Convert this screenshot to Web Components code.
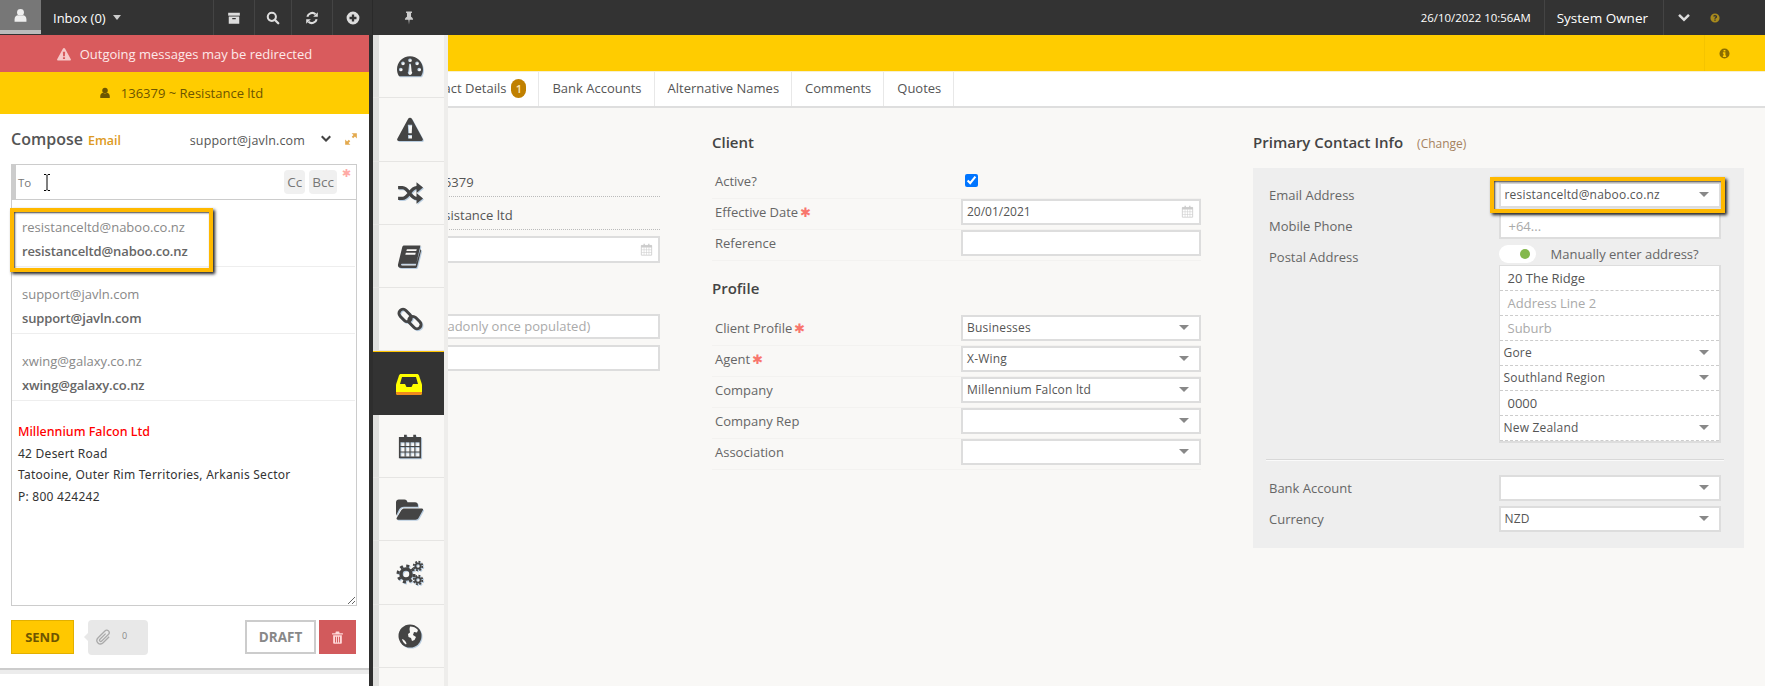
<!DOCTYPE html>
<html>
<head>
<meta charset="utf-8">
<title>Client</title>
<style>
  html, body { margin: 0; height: 686px; overflow: hidden; background: #f9f8f6; font-family: "Open Sans", "Noto Sans", sans-serif; }
</style>
</head>
<body>
<app-shell>
  <top-bar></top-bar>
  <client-page></client-page>
  <compose-drawer></compose-drawer>
</app-shell>

<script>
// icon shapes, all on a 24x24 box. var(--hole) is the colour behind the icon
const ICONS = {
  user: '<circle cx="12" cy="7" r="5.5"/><path d="M2.5 22v-4c0-4 3-6.500 5.500-6.500 2.500 1.800 5.500 1.800 8 0 2.500 0 5.500 2.500 5.500 6.500v4z"/>',
  archive: '<path d="M2 3h20v5H2z"/><path fill-rule="evenodd" d="M3 9.500h18V22H3zM9 12v2h6v-2z"/>',
  search: '<circle cx="10" cy="10" r="7" fill="none" stroke="currentColor" stroke-width="3.500"/><path d="M15 15l6 6" stroke="currentColor" stroke-width="4" stroke-linecap="round"/>',
  refresh: '<path d="M4 10a8.500 8.500 0 0 1 14-4.500" fill="none" stroke="currentColor" stroke-width="3.500"/><path d="M22 2v8h-8z"/><path d="M20 14a8.500 8.500 0 0 1-14 4.500" fill="none" stroke="currentColor" stroke-width="3.500"/><path d="M2 22v-8h8z"/>',
  plus: '<path fill-rule="evenodd" d="M12 1a11 11 0 1 0 0 22 11 11 0 0 0 0-22zM10 6h4v4h4v4h-4v4h-4v-4H6v-4h4z"/>',
  pin: '<path d="M7 1h10v2.500h-1.500V10c2 1 3.500 3 3.500 5H13l-1 8-1-8H5c0-2 1.500-4 3.500-5V3.500H7z"/>',
  warning: '<path fill-rule="evenodd" d="M12 1.500c.8 0 1.300.4 1.700 1l10 18.500c.5 1 0 2-1.200 2H1.500C.3 23-.2 22 .3 21l10-18.500c.4-.6.9-1 1.700-1zM10 8l.4 8h3.200l.4-8zM10.200 17.500v3.200h3.600v-3.200z"/>',
  dashboard: '<path fill-rule="evenodd" d="M12 3C5.400 3 0 8.400 0 15c0 2.200.6 4.200 1.600 6 .2.300.5.500.9.500h19c.4 0 .7-.2.900-.5 1-1.800 1.600-3.800 1.600-6 0-6.600-5.400-12-12-12zM12 5a1.700 1.700 0 1 1 0 3.400A1.700 1.700 0 0 1 12 5zM5.500 7.800a1.700 1.700 0 1 1 0 3.400 1.700 1.700 0 0 1 0-3.400zM3.500 13.500a1.700 1.700 0 1 1 0 3.400 1.700 1.700 0 0 1 0-3.400zM18.500 7.800a1.700 1.700 0 1 1 0 3.400 1.700 1.700 0 0 1 0-3.400zM20.500 13.500a1.700 1.700 0 1 1 0 3.400 1.700 1.700 0 0 1 0-3.400zM12.800 10l.7 6.800a2 2 0 1 1-3 0l.7-6.800z"/>',
  random: '<path d="M1 7h4c6 0 7 10 13 10h2M1 17h4c6 0 7-10 13-10h2" fill="none" stroke="currentColor" stroke-width="3"/><path d="M18 2l6 5-6 5zM18 12l6 5-6 5z"/>',
  book: '<path d="M7 1.500h15.500L18.500 19H5c-1.500 0-1.500 1.700 0 1.700h13l4.500-15.700.8 1-4 15.500c-.3 1-1 1.500-2 1.500H4c-2.200 0-3.500-1.500-3-3.500L5 3c.2-.9 1-1.500 2-1.500z"/><path fill="var(--hole)" d="M9.500 5h9.500l-.5 1.800H9zM8.500 8.500H18l-.5 1.800H8z"/>',
  link: '<g fill="none" stroke="currentColor" stroke-width="2.700"><rect x="1" y="5" width="13" height="7.500" rx="3.750" transform="rotate(45 7.500 8.750)"/><rect x="10" y="11.500" width="13" height="7.500" rx="3.750" transform="rotate(45 16.500 15.250)"/></g>',
  calendar: '<path d="M2.500 4.500h19v18h-19z" fill="none" stroke="currentColor" stroke-width="1.500"/><path d="M2 4h20v4.500H2zM6.500 1.500h2.500V6H6.500zM15 1.500h2.500V6H15z"/><path d="M2.500 12.500h19M2.500 17.500h19M7.500 8v14M12 8v14M16.500 8v14" fill="none" stroke="currentColor" stroke-width="1"/>',
  folder: '<path d="M0 5.500C0 4 1 3 2.500 3h5C9 3 10 4 10 5.500h7c1.500 0 2.500 1 2.500 2.500v1.500H7c-2 0-3.500 1-4.300 2.500L0 17.500z"/><path d="M7.500 11H23c1 0 1.300.8.800 1.700L20 19.500c-.6 1-1.500 1.500-2.700 1.500H1.500c-1 0-1.300-.8-.8-1.700L4.800 12.500c.6-1 1.500-1.500 2.700-1.500z"/>',
  globe: '<circle cx="12" cy="12" r="11.500"/><path fill="var(--hole)" d="M12 2.500c3 0 6 1 8 3.500l-1 2.500-3-.5-1 3 3 2-1.500 3-2.500 1-1-3-2.500-1-.5-3 2-1.500-.5-3.500zM4 15c2 .5 3.500 2 4.500 4.500l-.5 1C6 19.500 4.500 17.500 4 15z"/>',
  clip: '<path d="M20 11l-8.500 8.500c-2.200 2.200-5.300 2.200-7.300.2s-2-5.100.2-7.300L14 2.800c1.500-1.500 3.600-1.500 5-.1s1.400 3.500-.1 5L9.500 17c-.8.8-1.900.8-2.600.1s-.7-1.800.1-2.600L15 6.500" fill="none" stroke="currentColor" stroke-width="1.800"/>',
  trash: '<path fill-rule="evenodd" d="M9 1h6l1 3h6v2.500H2V4h6zM4 8h16v14c0 .8-.7 1.500-1.500 1.500h-13C4.700 23.500 4 22.800 4 22zM7.500 10.500v10.500h1.800V10.500zM11.100 10.500v10.500h1.800V10.500zM14.700 10.500v10.500h1.800V10.500z"/>',
  expand: '<path d="M13 2h9v9l-3.300-3.300-3 3-2.400-2.400 3-3zM11 22H2v-9l3.300 3.300 3-3 2.400 2.400-3 3z"/>',
  chevron: '<path d="M2 8l3-3 7 7 7-7 3 3-10 10z"/>',
  help: '<path fill-rule="evenodd" d="M12 1a11 11 0 1 0 0 22 11 11 0 0 0 0-22zM12 4.500c3 0 5 1.800 5 4.200 0 2-1.200 2.900-2.400 3.700-.7.400-1 .8-1 1.600h-3.200c0-2 .7-2.800 1.900-3.500.8-.5 1.400-.9 1.400-1.600 0-.8-.7-1.400-1.700-1.400-1 0-1.800.6-2.400 1.500L7.500 7C8.500 5.400 10 4.500 12 4.500zM10.400 15.500h3.200v3h-3.200z"/>',
  info: '<path fill-rule="evenodd" d="M12 1a11 11 0 1 0 0 22 11 11 0 0 0 0-22zM10 4.500h4v3h-4zM8.500 9.500H14v7h1.500v3h-7v-3H10v-4H8.500z"/>'
};

class FaIcon extends HTMLElement {
  constructor() {
    super();
    const size = this.getAttribute('size') || 14;
    const shape = ICONS[this.getAttribute('name')];
    const shadow = this.attachShadow({ mode: 'open' });
    shadow.innerHTML = `
      <style>:host { display: inline-flex; flex: none; line-height: 0; } svg { display: block; }</style>
      <svg width="${size}" height="${size}" viewBox="0 0 24 24" fill="currentColor">${shape}</svg>`;
  }
}
customElements.define('fa-icon', FaIcon);

// little helper, most elements here are only a style block and some markup
function element(tag, html) {
  const template = document.createElement('template');
  template.innerHTML = html;
  customElements.define(tag, class extends HTMLElement {
    constructor() {
      super();
      this.attachShadow({ mode: 'open' }).appendChild(template.content.cloneNode(true));
    }
  });
}

element('app-shell', `
  <style>
    :host { display: block; position: relative; width: 1765px; height: 686px; overflow: hidden; }
  </style>
  <slot></slot>
`);

element('bar-button', `
  <style>
    :host { display: flex; align-items: center; justify-content: center; height: 35px; box-sizing: border-box; border-left: 1px solid #444; color: #ddd; }
  </style>
  <slot></slot>
`);

element('top-bar', `
  <style>
    :host { display: flex; align-items: center; height: 35px; background: #333; color: #fff; font-size: 13px; }
    .me { width: 41px; height: 34px; box-sizing: border-box; background: #777; border-bottom: 4px solid #bbb; margin-bottom: 1px; display: flex; align-items: center; justify-content: center; color: #eee; }
    .inbox { display: flex; align-items: center; width: 172px; padding-left: 12px; box-sizing: border-box; }
    .tri { width: 0; height: 0; margin-left: 7px; border: 4.500px solid transparent; border-top: 5px solid #ccc; border-bottom: 0; }
    .b1 { width: 41px; } .b2 { width: 37px; } .b3 { width: 41px; } .b4 { width: 40px; }
    .pin { width: 72px; border-left: 1px solid #2a2a2a; color: #ccc; }
    .spacer { flex: 1; }
    .date { font-size: 11.400px; padding-right: 13px; }
    .owner { height: 35px; display: flex; align-items: center; border-left: 1px solid #444; border-right: 1px solid #444; padding: 0 15px 0 12px; font-size: 13.500px; }
    .more { width: 40px; display: flex; justify-content: center; color: #ddd; }
    .help { color: #a88a1c; margin: 0 45px 0 6px; }
  </style>
  <div class="me"><fa-icon name="user" size="15"></fa-icon></div>
  <div class="inbox">Inbox (0)<div class="tri"></div></div>
  <bar-button class="b1"><fa-icon name="archive" size="14"></fa-icon></bar-button>
  <bar-button class="b2"><fa-icon name="search" size="14"></fa-icon></bar-button>
  <bar-button class="b3"><fa-icon name="refresh" size="14"></fa-icon></bar-button>
  <bar-button class="b4"><fa-icon name="plus" size="14"></fa-icon></bar-button>
  <bar-button class="pin"><fa-icon name="pin" size="14"></fa-icon></bar-button>
  <div class="spacer"></div>
  <div class="date">26/10/2022 10:56AM</div>
  <div class="owner">System Owner</div>
  <div class="more"><fa-icon name="chevron" size="14"></fa-icon></div>
  <div class="help"><fa-icon name="help" size="10"></fa-icon></div>
`);

element('callout-box', `
  <style>
    :host { display: block; position: absolute; box-sizing: border-box; border: 4px solid #ffb900; box-shadow: 2px 2px 3px #222, inset 1px 1px 2px #444; pointer-events: none; }
  </style>
`);

element('suggest-item', `
  <style>
    :host { display: block; height: 67px; box-sizing: border-box; border-bottom: 1px solid #eee; padding: 16px 0 0 10px; font-size: 13px; line-height: 23.500px; color: #888; }
    .addr { font-weight: 600; color: #666; letter-spacing: -.12px; }
  </style>
  <div><slot></slot></div>
  <div class="addr"><slot name="bold"></slot></div>
`);

element('compose-panel', `
  <style>
    :host { display: block; position: relative; width: 369px; height: 651px; background: #fff; }
    .redirect { height: 37px; background: #d95b5d; color: #fde9e9; font-size: 13px; display: flex; align-items: center; justify-content: center; gap: 9px; }
    .redirect fa-icon { color: #f7c9c9; }
    .client { height: 42px; padding-right: 7px; box-sizing: border-box; background: #ffcc00; color: #6d5500; font-size: 13px; display: flex; align-items: center; justify-content: center; gap: 10px; }
    .head { height: 50px; padding: 0 11px; display: flex; align-items: center; box-sizing: border-box; color: #555; }
    .head b { font-size: 16px; font-weight: 600; }
    .head em { font-style: normal; font-weight: 600; font-size: 12.500px; color: #dd9a22; margin-left: 5px; margin-top: 2px; }
    .from { margin-left: auto; font-size: 12.500px; letter-spacing: .15px; margin-top: 2px; }
    .head .down { margin-left: 15px; color: #444; }
    .head .grow { margin-left: 12px; color: #e3a94d; }
    .to { margin: 0 12px 0 11px; height: 36px; box-sizing: border-box; border: 1px solid #ccc; border-left: 5px solid #ccc; display: flex; align-items: center; padding-left: 2px; font-size: 11.500px; color: #777; position: relative; }
    .beam { margin-left: 12px; }
    .pill { background: #f0f0f0; border-radius: 4px; height: 24px; padding: 0 3px; display: flex; align-items: center; font-size: 13.500px; color: #777; }
    .cc { margin-left: auto; }
    .bcc { margin-left: 4px; margin-right: 19px; }
    .star { position: absolute; right: 5px; top: 3px; color: #ffaaa5; font-size: 11px; line-height: 11px; font-weight: 700; font-family: "DejaVu Sans", sans-serif; }
    .editor { margin: 0 12px 0 11px; height: 406px; box-sizing: border-box; border: 1px solid #ccc; border-top: 0; padding: 221px 0 0 6px; font-family: "Noto Sans", sans-serif; font-size: 12px; line-height: 21.500px; letter-spacing: .25px; color: #333; overflow: auto; resize: vertical; }
    .editor .co { color: #f00; font-weight: 500; font-size: 12.500px; letter-spacing: 0; }
    .list { position: absolute; left: 12px; top: 165px; width: 343px; height: 201px; background: #fff; }
    .list callout-box { left: -2px; top: 8px; width: 203px; height: 64px; }
    .foot { margin: 14px 13px 0 11px; height: 48px; display: flex; align-items: flex-start; border: 0; }
    .send { width: 63px; height: 34px; box-sizing: border-box; background: #ffc800; border: 1px solid #e2b000; color: #6d5500; font-size: 13px; font-weight: 700; display: flex; align-items: center; justify-content: center; }
    .attach { margin-left: 14px; width: 60px; height: 35px; background: #e8e8e8; border-radius: 4px; position: relative; display: flex; align-items: center; color: #999; font-size: 9px; }
    .attach:before { content: ""; position: absolute; left: -4px; top: 13px; border: 4px solid transparent; border-right-color: #e8e8e8; border-left: 0; }
    .attach fa-icon { margin-left: 7px; color: #aaa; }
    .attach span { margin-left: 10px; margin-bottom: 4px; color: #888; }
    .draft { margin-left: auto; width: 71px; height: 34px; box-sizing: border-box; background: #fff; border: 2px solid #ccc; color: #888; font-weight: 700; font-size: 13.500px; display: flex; align-items: center; justify-content: center; }
    .trash { margin-left: 3px; width: 37px; height: 34px; background: #d25a5c; color: #ffd9d9; display: flex; align-items: center; justify-content: center; }
    .rule { height: 4px; background: #ececec; border-top: 2px solid #ccc; margin-top: 0; }
  </style>
  <div class="redirect"><fa-icon name="warning" size="14"></fa-icon>Outgoing messages may be redirected</div>
  <div class="client"><fa-icon name="user" size="12"></fa-icon>136379 ~ Resistance ltd</div>
  <div class="head">
    <b>Compose</b><em>Email</em>
    <span class="from">support@javln.com</span>
    <fa-icon class="down" name="chevron" size="12"></fa-icon>
    <fa-icon class="grow" name="expand" size="14"></fa-icon>
  </div>
  <div class="to">
    To
    <svg class="beam" width="8" height="17" viewBox="0 0 8 17" fill="none" stroke="#000"><path d="M1 .5h2l1 1 1-1h2M4 1.500v14M1 16.500h2l1-1 1 1h2"/></svg>
    <span class="pill cc">Cc</span><span class="pill bcc">Bcc</span>
    <span class="star">✱</span>
  </div>
  <div class="editor">
    <div class="co">Millennium Falcon Ltd</div>
    <div>42 Desert Road</div>
    <div>Tatooine, Outer Rim Territories, Arkanis Sector</div>
    <div>P: 800 424242</div>
  </div>
  <div class="foot">
    <div class="send">SEND</div>
    <div class="attach"><fa-icon name="clip" size="17"></fa-icon><span>0</span></div>
    <div class="draft">DRAFT</div>
    <div class="trash"><fa-icon name="trash" size="13"></fa-icon></div>
  </div>
  <div class="rule"></div>
  <div class="list">
    <suggest-item>resistanceltd@naboo.co.nz<span slot="bold">resistanceltd@naboo.co.nz</span></suggest-item>
    <suggest-item>support@javln.com<span slot="bold">support@javln.com</span></suggest-item>
    <suggest-item>xwing@galaxy.co.nz<span slot="bold">xwing@galaxy.co.nz</span></suggest-item>
    <callout-box></callout-box>
  </div>
`);

class NavItem extends HTMLElement {
  constructor() {
    super();
    const shadow = this.attachShadow({ mode: 'open' });
    shadow.innerHTML = `
      <style>
        :host { display: flex; align-items: center; justify-content: center; height: 63.300px; box-sizing: border-box; padding-left: 6px; padding-right: 4px; border-bottom: 1px solid #e6e5e3; color: #444; --hole: #f9f8f6; background: linear-gradient(90deg, #e0e0de 6px, #f9f8f6 6px); }
        ::slotted(*) { filter: drop-shadow(1px 1px 0 #b9cde0); }
        :host([active]) { background: #333; border-top: 1px solid #ffc400; border-bottom: 0; padding-right: 0; padding-left: 0; }
        :host([active]) ::slotted(*) { filter: none; }
      </style>
      <slot></slot>`;
  }
}
customElements.define('nav-item', NavItem);

element('side-nav', `
  <style>
    :host { display: block; width: 71px; height: 651px; background: linear-gradient(90deg, #e0e0de 6px, #f9f8f6 6px); box-shadow: 4px 0 0 #eeedeb; }
  </style>
  <nav-item><fa-icon name="dashboard" size="26"></fa-icon></nav-item>
  <nav-item><fa-icon name="warning" size="26"></fa-icon></nav-item>
  <nav-item><fa-icon name="random" size="26"></fa-icon></nav-item>
  <nav-item><fa-icon name="book" size="25"></fa-icon></nav-item>
  <nav-item><fa-icon name="link" size="26"></fa-icon></nav-item>
  <nav-item active>
    <svg width="26" height="22" viewBox="0 0 26 22">
      <path d="M5 1h16c1 0 1.500.5 2 1.500l3 9V20c0 1-.8 2-2 2H2c-1.200 0-2-1-2-2v-8.500l3-9C3.500 1.500 4 1 5 1z" fill="#ffff00"/>
      <path d="M0 19h26v1c0 1-.8 2-2 2H2c-1.200 0-2-1-2-2z" fill="#f08a1d"/>
      <path d="M6 4h14l2 7h-5l-1.500 3h-5L9 11H4z" fill="#333"/>
    </svg>
  </nav-item>
  <nav-item><fa-icon name="calendar" size="26"></fa-icon></nav-item>
  <nav-item><fa-icon name="folder" size="27"></fa-icon></nav-item>
  <nav-item>
    <svg width="28" height="26" viewBox="0 0 28 26" fill="none" stroke="#444">
      <circle cx="10" cy="14" r="5" stroke-width="3.500"/>
      <circle cx="10" cy="14" r="8" stroke-width="3" stroke-dasharray="3 3.280"/>
      <circle cx="22" cy="6" r="2.600" stroke-width="1.800"/>
      <circle cx="22" cy="6" r="4.300" stroke-width="1.800" stroke-dasharray="1.900 1.470"/>
      <circle cx="22" cy="20" r="2.600" stroke-width="1.800"/>
      <circle cx="22" cy="20" r="4.300" stroke-width="1.800" stroke-dasharray="1.900 1.470"/>
    </svg>
  </nav-item>
  <nav-item><fa-icon name="globe" size="24"></fa-icon></nav-item>
`);

element('compose-drawer', `
  <style>
    /* the drawer lies over the client page */
    :host { display: flex; position: absolute; left: 0; top: 35px; width: 444px; height: 651px; }
    .gap { width: 4px; background: #2e2e2e; }
  </style>
  <compose-panel></compose-panel>
  <div class="gap"></div>
  <side-nav></side-nav>
`);

element('page-tab', `
  <style>
    :host { display: flex; align-items: center; padding: 0 12px 2px 13px; border-right: 1px solid #e8e8e8; font-size: 13px; color: #555; }
  </style>
  <slot></slot>
`);

element('tab-strip', `
  <style>
    :host { display: flex; height: 34px; background: #fff; border-top: 1px solid #f6efd2; border-bottom: 2px solid #dedede; padding-left: 0; }
    .first { padding-left: 415px; }
    .badge { margin-left: 5px; width: 15px; height: 19px; border-radius: 8px; background: #c08000; color: #ffe9b0; font-size: 11px; font-weight: 600; display: flex; align-items: center; justify-content: center; }
  </style>
  <page-tab class="first">Contact Details<span class="badge">1</span></page-tab>
  <page-tab>Bank Accounts</page-tab>
  <page-tab>Alternative Names</page-tab>
  <page-tab>Comments</page-tab>
  <page-tab>Quotes</page-tab>
`);

element('section-title', `
  <style>
    :host { display: block; height: 35px; font-size: 15px; font-weight: 600; line-height: 18px; color: #444; }
  </style>
  <slot></slot>
`);

// a white box: text field, or a select when it has the select attribute
class FieldBox extends HTMLElement {
  constructor() {
    super();
    const shadow = this.attachShadow({ mode: 'open' });
    shadow.innerHTML = `
      <style>
        :host { display: flex; align-items: center; height: 26px; box-sizing: border-box; background: #fff; border: 2px solid #ddd; padding: 0 8px 1px 4px; font-size: 12px; letter-spacing: .2px; color: #555; overflow: hidden; white-space: nowrap; }
        :host([muted]) { color: #aaa; }
        :host([plain]) { padding-left: 8px; font-size: 13px; letter-spacing: 0; }
        :host([date]) { letter-spacing: 0; }
        .arrow { margin-left: auto; flex: none; width: 0; height: 0; border: 5px solid transparent; border-top: 5px solid #888; border-bottom: 0; margin-right: 2px; }
        :host(:not([select])) .arrow { display: none; }
        .cal { margin-left: auto; margin-right: -3px; color: #ccc; display: none; }
        :host([date]) .cal { display: block; }
      </style>
      <slot></slot><div class="arrow"></div><fa-icon class="cal" name="calendar" size="13"></fa-icon>`;
  }
}
customElements.define('field-box', FieldBox);

class FormRow extends HTMLElement {
  constructor() {
    super();
    const shadow = this.attachShadow({ mode: 'open' });
    shadow.innerHTML = `
      <style>
        :host { display: grid; grid-template-columns: 246px 240px; padding-left: 3px; height: 31px; box-sizing: border-box; border-bottom: 1px solid #f3f2f0; font-size: 13px; color: #666; }
        .label { height: 26px; display: flex; align-items: center; gap: 2px; }
        .star { color: #f8766d; font-size: 13px; font-weight: 700; font-family: "DejaVu Sans", sans-serif; display: none; }
        :host([required]) .star { display: inline; }
      </style>
      <div class="label">${this.getAttribute('label')}<span class="star">✱</span></div>
      <slot></slot>`;
  }
}
customElements.define('form-row', FormRow);

element('contact-row', `
  <style>
    :host { display: grid; grid-template-columns: 229.500px 222.500px; height: 31px; font-size: 13px; color: #666; }
    .label { height: 25px; display: flex; align-items: center; }
  </style>
  <div class="label"><slot name="label"></slot></div>
  <slot></slot>
`);

element('address-box', `
  <style>
    :host { display: block; box-sizing: border-box; background: #fff; border: 1px solid #ddd; border-right-width: 2px; border-bottom-width: 2px; }
    ::slotted(*) { height: 25px !important; border: 0 !important; border-bottom: 1px dashed #ccc !important; }
  </style>
  <slot></slot>
`);

element('contact-panel', `
  <style>
    :host { display: block; position: relative; background: #eee; height: 380px; padding: 14px 23px 0 16px; box-sizing: border-box; }
    .toggle-line { display: flex; align-items: center; height: 18px; font-size: 13px; color: #666; margin: 1px 0 2px; }
    .toggle { width: 37px; height: 18px; border-radius: 9px; background: #fff; position: relative; margin-right: 15px; }
    .toggle:after { content: ""; position: absolute; right: 6px; top: 4px; width: 10px; height: 10px; border-radius: 50%; background: #84b84c; }
    .side { display: grid; grid-template-columns: 229.500px 222.500px; height: 198px; font-size: 13px; color: #666; }
    .postal { height: 25px; display: flex; align-items: center; }
    hr { border: 0; border-top: 1px solid #d8d8d8; border-bottom: 1px solid #fafafa; margin: 17px -3px 14px -3px; }
    callout-box { left: 237px; top: 9px; width: 235px; height: 36px; }
  </style>
  <contact-row><span slot="label">Email Address</span><field-box select>resistanceltd@naboo.co.nz</field-box></contact-row>
  <contact-row><span slot="label">Mobile Phone</span><field-box muted plain>+64...</field-box></contact-row>
  <div class="side">
    <div class="postal">Postal Address</div>
    <div>
      <div class="toggle-line"><div class="toggle"></div>Manually enter address?</div>
      <address-box>
        <field-box plain>20 The Ridge</field-box>
        <field-box muted plain>Address Line 2</field-box>
        <field-box muted plain>Suburb</field-box>
        <field-box select>Gore</field-box>
        <field-box select>Southland Region</field-box>
        <field-box plain>0000</field-box>
        <field-box select>New Zealand</field-box>
      </address-box>
    </div>
  </div>
  <hr>
  <contact-row><span slot="label">Bank Account</span><field-box select></field-box></contact-row>
  <contact-row><span slot="label">Currency</span><field-box select>NZD</field-box></contact-row>
  <callout-box></callout-box>
`);

element('client-page', `
  <style>
    :host { display: block; }
    .banner { height: 36px; background: #ffcc00; display: flex; justify-content: flex-end; }
    .banner div { width: 61px; box-sizing: border-box; border-left: 1px solid #f5c400; display: flex; align-items: center; padding-left: 14px; color: #8a6d00; }
    .cols { display: grid; grid-template-columns: 240px 489px 491px; column-gap: 52px; padding: 25px 0 0 420px; }
    .read { height: 29px; box-sizing: border-box; border-bottom: 1px dotted #bbb; font-size: 13px; line-height: 28px; color: #555; padding-left: 9px; }
    .first { margin-top: 35px; }
    .read + .read { height: 33px; line-height: 37px; }
    .date { margin-top: 6px; height: 27px; }
    .ph { margin-top: 51px; height: 25px; padding-left: 9px; font-size: 13px; letter-spacing: 0; }
    .ph2 { margin-top: 6px; }
    .pad { height: 18px; }
    .title3 { display: flex; align-items: baseline; }
    .change { font-size: 12px; font-weight: 400; color: #a5825f; margin-left: 14px; }
  </style>
  <div class="banner"><div><fa-icon name="info" size="11"></fa-icon></div></div>
  <tab-strip></tab-strip>
  <div class="cols">
    <div>
      <div class="read first">136379</div>
      <div class="read">Resistance ltd</div>
      <field-box class="date" date></field-box>
      <field-box class="ph" muted>(readonly once populated)</field-box>
      <field-box class="ph2"></field-box>
    </div>
    <div>
      <section-title>Client</section-title>
      <form-row label="Active?"><input type="checkbox" checked style="margin:6px 0 0 4px;width:13px;height:13px"></form-row>
      <form-row label="Effective Date" required><field-box date>20/01/2021</field-box></form-row>
      <form-row label="Reference"><field-box></field-box></form-row>
      <div class="pad"></div>
      <section-title style="height:36px">Profile</section-title>
      <form-row label="Client Profile" required><field-box select>Businesses</field-box></form-row>
      <form-row label="Agent" required><field-box select>X-Wing</field-box></form-row>
      <form-row label="Company"><field-box select>Millennium Falcon ltd</field-box></form-row>
      <form-row label="Company Rep"><field-box select></field-box></form-row>
      <form-row label="Association"><field-box select></field-box></form-row>
    </div>
    <div>
      <section-title><span class="title3">Primary Contact Info<span class="change">(Change)</span></span></section-title>
      <contact-panel></contact-panel>
    </div>
  </div>
`);
</script>
</body>
</html>
